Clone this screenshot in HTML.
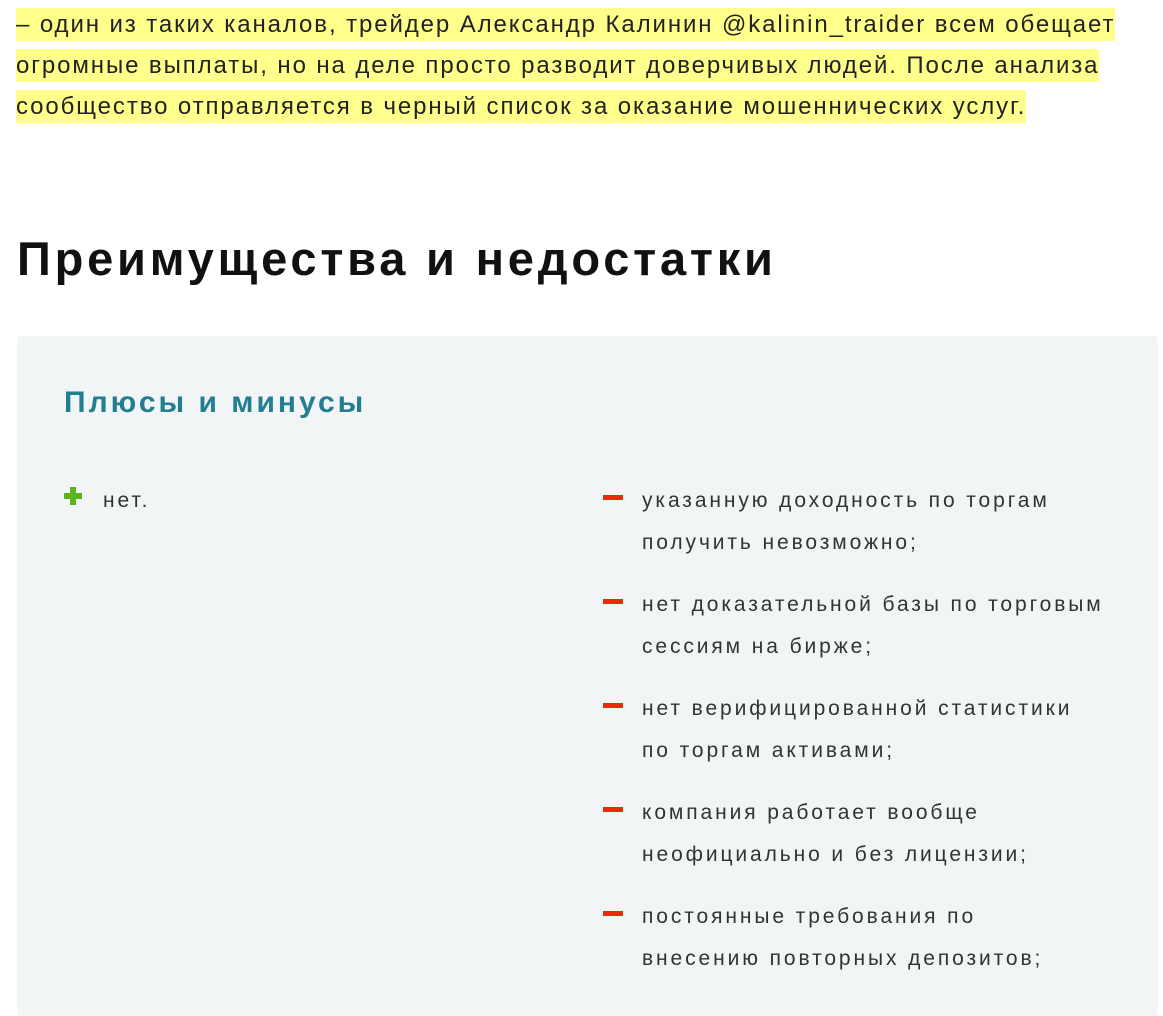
<!DOCTYPE html>
<html><head><meta charset="utf-8"><style>
body{margin:0;width:1163px;height:995px;overflow:hidden;background:#fff;font-family:"Liberation Sans",sans-serif;color:#222;position:relative}
.p{position:absolute;left:16px;top:4px;width:1140px;font-size:24px;line-height:41px;letter-spacing:1.9px;white-space:nowrap}
.p span{background:#ffff8c;padding:3px 0}
h2{position:absolute;left:17px;top:231px;margin:0;font-size:47px;font-weight:bold;color:#111;letter-spacing:3.8px;white-space:nowrap}
.box{position:absolute;left:17px;top:336px;width:1141px;height:680px;background:#f1f5f6;border-radius:4px}
h3{position:absolute;left:64px;top:386px;margin:0;font-size:30px;color:#217f91;font-weight:bold;letter-spacing:3px;white-space:nowrap}
.it{position:absolute;font-size:21px;line-height:42px;color:#333;letter-spacing:2.9px;white-space:nowrap}
.plus{position:absolute;left:64px;top:487px;width:18px;height:18px}
.plus:before{content:"";position:absolute;left:6px;top:0;width:6px;height:18px;background:#5db31c}
.plus:after{content:"";position:absolute;left:0;top:6px;width:18px;height:6px;background:#5db31c}
.m{position:absolute;left:603px;width:20px;height:5px;background:#f2270c}
</style></head><body>
<div class="p"><span>– один из таких каналов, трейдер Александр Калинин @kalinin_traider всем обещает</span><br><span>огромные выплаты, но на деле просто разводит доверчивых людей. После анализа</span><br><span>сообщество отправляется в черный список за оказание мошеннических услуг.</span></div>
<h2>Преимущества и недостатки</h2>
<div class="box"></div>
<h3>Плюсы и минусы</h3>
<div class="plus"></div>
<div class="it" style="left:103px;top:480px">нет.</div>
<div class="m" style="top:495px"></div><div class="it" style="left:642px;top:480px">указанную доходность по торгам<br>получить невозможно;</div>
<div class="m" style="top:599px"></div><div class="it" style="left:642px;top:584px">нет доказательной базы по торговым<br>сессиям на бирже;</div>
<div class="m" style="top:703px"></div><div class="it" style="left:642px;top:688px">нет верифицированной статистики<br>по торгам активами;</div>
<div class="m" style="top:807px"></div><div class="it" style="left:642px;top:792px">компания работает вообще<br>неофициально и без лицензии;</div>
<div class="m" style="top:911px"></div><div class="it" style="left:642px;top:896px">постоянные требования по<br>внесению повторных депозитов;</div>
</body></html>
